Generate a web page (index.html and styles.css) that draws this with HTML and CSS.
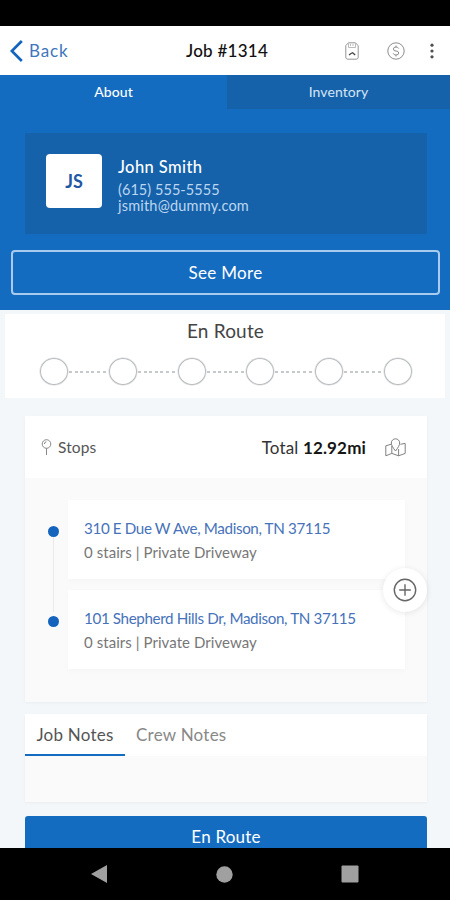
FILE: index.html
```
<!DOCTYPE html>
<html lang="en">
<head>
<meta charset="utf-8">
<title>Job #1314</title>
<link rel="stylesheet" href="styles.css">
</head>
<body>
<div class="phone">
  <div class="status-bar"></div>
  <header class="header">
    <a class="back"><svg width="13" height="24" viewBox="0 0 13 24"><path d="M11.8 2 1.8 12l10 10" fill="none" stroke="#1264bd" stroke-width="2.7"/></svg><span class="back-label">Back</span></a>
    <h1 class="title">Job #1314</h1>
    <div class="actions">
      <svg width="14" height="18" viewBox="0 0 14 18" fill="none" stroke="#959595"><path d="M3.5.8h7l2.7 3v11.4q0 2-2 2H2.8q-2 0-2-2V3.5z"/><path d="M3.5 1v4.5h7V1M5.5 2v2M8 2v2" stroke="#bbb"/><path d="m4 13 2-1.5 1.6-.8 2.6 2.3" stroke="#444" stroke-width="1.3"/></svg>
      <svg width="18" height="18" viewBox="0 0 18 18" fill="none" stroke="#8c8c8c"><circle cx="9" cy="9" r="8.2"/><path d="M11.8 6.6Q11 5 9 5 6.4 5 6.4 7T9 9t2.7 2T9 13q-2.2 0-2.9-1.7M9 3.5V5M9 13v1.5"/></svg>
      <svg class="more" width="4" height="16" viewBox="0 0 4 16" fill="#4d4d4d"><circle cx="2" cy="2.2" r="1.6"/><circle cx="2" cy="8" r="1.6"/><circle cx="2" cy="13.8" r="1.6"/></svg>
    </div>
  </header>
  <section class="hero">
    <nav class="tabs"><a class="tab">About</a><a class="tab tab-dim"><span class="inventory">Inventory</span></a></nav>
    <div class="client">
      <div class="avatar">JS</div>
      <div class="client-info">
        <div class="client-name">John Smith</div>
        <div class="client-phone">(615) 555-5555</div>
        <div class="client-mail">jsmith@dummy.com</div>
      </div>
    </div>
    <button class="see-more"><span>See More</span></button>
  </section>
  <section class="progress">
    <h2 class="progress-title">En Route</h2>
    <div class="steps">
      <i class="step"></i><i class="dash"></i><i class="step"></i><i class="dash"></i><i class="step"></i><i class="dash"></i><i class="step"></i><i class="dash"></i><i class="step"></i><i class="dash"></i><i class="step"></i>
    </div>
  </section>
  <section class="stops">
    <div class="stops-head">
      <svg class="pin" width="11" height="17" viewBox="0 0 11 17" fill="none" stroke="#888"><circle cx="5.5" cy="5" r="4.3"/><path d="M5.5 9.3V16M3.4 5q0-2 2-2.2"/></svg>
      <span class="stops-label">Stops</span>
      <span class="total">Total <b>12.92mi</b></span>
      <svg class="map" width="21" height="19" viewBox="0 0 21 19" fill="none" stroke="#808080"><path d="M6.5 6.2.8 7.8v10l6-2.4 6.8 2.4 6.6-2.4v-10l-4.8.9M6.8 8v7.4M13.6 11v6.8M10.5 13Q6.3 7.8 6.3 5a4.2 4.2 0 0 1 8.4 0q0 2.8-4.2 8z"/></svg>
    </div>
    <div class="stops-body">
      <div class="timeline"><i class="dot"></i><i class="line"></i><i class="dot"></i></div>
      <div class="stop-list">
        <article class="stop"><div class="address">310 E Due W Ave, Madison, TN 37115</div><div class="detail">0 stairs | Private Driveway</div></article>
        <article class="stop"><div class="address">101 Shepherd Hills Dr, Madison, TN 37115</div><div class="detail">0 stairs | Private Driveway</div></article>
      </div>
      <button class="add"><svg width="24" height="24" viewBox="0 0 24 24" fill="none" stroke="#666" stroke-width="1.4"><circle cx="12" cy="12" r="10.7"/><path d="M12 6.2v11.6M6.2 12h11.6"/></svg></button>
    </div>
  </section>
  <section class="notes">
    <nav class="note-tabs"><a class="note-tab active"><span>Job Notes</span></a><a class="note-tab crew"><span>Crew Notes</span></a></nav>
  </section>
  <button class="route-button"><span>En Route</span></button>
  <footer class="nav-bar">
    <svg width="16" height="18" viewBox="0 0 16 18"><path d="M0 9 16 0v18z" fill="#a0a0a0"/></svg>
    <svg width="17" height="17" viewBox="0 0 17 17"><circle cx="8.5" cy="8.5" r="8.2" fill="#a0a0a0"/></svg>
    <svg width="18" height="18" viewBox="0 0 18 18"><rect x=".5" y=".5" width="17" height="17" rx="1" fill="#a0a0a0"/></svg>
  </footer>
</div>
</body>
</html>
```
FILE: styles.css
```
* { box-sizing: border-box; }
body { margin: 0; font-family: Lato, "Liberation Sans", sans-serif; }
h1, h2 { margin: 0; font-weight: 400; }
button { font-family: inherit; padding: 0; border: 0; }
svg { display: block; flex: none; }
.phone { width: 450px; height: 900px; display: flex; flex-direction: column; overflow: hidden; background: #f4f7f9; }
.phone > * { flex: none; }
.status-bar { height: 26px; background: #000; }
.header { height: 49px; background: #fff; display: grid; grid-template-columns: 1fr auto 1fr; align-items: center; padding: 0 16px 0 10px; }
.back { display: flex; align-items: center; gap: 6px; color: #4076bd; font-size: 17px; line-height: 22px; letter-spacing: .9px; }
.title { font-size: 17px; line-height: 22px; font-weight: 500; color: #111; letter-spacing: .25px; margin: 0 -5px 0 5px; }
.actions { display: flex; justify-content: flex-end; align-items: center; }
.actions svg:nth-child(2) { margin: 0 25px 0 28px; }
.hero { height: 235px; background: #146cc0; color: #fff; }
.tabs { display: flex; height: 34px; }
.tab { flex: 1; text-align: center; font-size: 14px; line-height: 33px; font-weight: 500; letter-spacing: .1px; }
.tab-dim { background: #1662aa; color: #d5e5f5; font-weight: 400; flex: 0 0 223px; }
.client { margin: 24px 23px 0 25px; height: 101px; background: #1562aa; display: flex; padding: 21px; gap: 16px; border-radius: 1px; }
.avatar { width: 56px; height: 54px; border-radius: 4px; background: #fff; color: #2257a4; font-size: 18px; font-weight: 700; line-height: 54px; text-align: center; }
.client-info { padding-top: 2px; white-space: nowrap; }
.client-name { font-size: 16.5px; line-height: 22px; font-weight: 500; letter-spacing: .4px; }
.client-phone, .client-mail { font-size: 14.5px; line-height: 17px; color: #bcd6f0; letter-spacing: .2px; }
.client-phone { padding-top: 3px; height: 20px; letter-spacing: .05px; }
.client-mail { line-height: 15px; }
.see-more { display: block; margin: 16px 10px 0 11px; width: 429px; height: 45px; border: 2px solid #a9cbee; border-radius: 4px; background: transparent; color: #fff; font-size: 17px; letter-spacing: .3px; }
.progress { margin: 4px 5px 0; height: 84px; background: #fff; }
.progress-title { text-align: center; font-size: 19px; line-height: 24px; padding: 5px 0 0 1px; height: 44px; color: #444; letter-spacing: .2px; }
.steps { display: flex; align-items: center; padding: 0 33px 0 35px; }
.step { width: 28px; height: 27px; flex: none; border: 1.5px solid #b9bcbf; box-shadow: 0 0 0 .5px #d9dbde; border-radius: 50%; }
.dash { flex: 1; height: 2px; margin: 0 1px; background: repeating-linear-gradient(90deg, #c6c9cb 0 3px, transparent 3px 5.6px); }
.stops { margin: 18px 23px 0 25px; height: 286px; background: #fafafa; box-shadow: 0 1px 3px #0000000b; }
.stops-head { height: 62px; background: #fff; display: flex; align-items: center; padding: 0 21px 0 16px; color: #555; }
.stops-label { font-size: 15.5px; margin-left: 6px; letter-spacing: .1px; }
.total { margin-left: auto; font-size: 17px; color: #333; letter-spacing: .15px; }
.total b { font-weight: 700; color: #161616; }
.map { margin-left: 19px; }
.stops-body { position: relative; padding: 22px 22px 0 22px; display: flex; }
.timeline { width: 12px; height: 101px; margin: 26px 9px 0 0; display: flex; flex-direction: column; align-items: center; }
.dot { width: 11px; height: 11px; border-radius: 50%; background: #1463bd; flex: none; }
.line { width: 1px; flex: 1; margin-bottom: 4px; background: #e9eaeb; }
.stop-list { flex: 1; display: flex; flex-direction: column; gap: 11px; }
.stop { height: 79px; padding: 17px 16px; background: #fff; box-shadow: 0 2px 6px #00000006; white-space: nowrap; }
.address { font-size: 15.2px; line-height: 23px; color: #4672ba; letter-spacing: -.37px; }
.detail { font-size: 15px; line-height: 24px; color: #777; letter-spacing: .06px; }
.add { position: absolute; right: 0; top: 90px; width: 44px; height: 44px; border-radius: 50%; background: #fff; box-shadow: 0 1px 6px #00000018; display: flex; align-items: center; justify-content: center; }
.notes { margin: 12px 23px 0 25px; height: 88px; background: #fafafa; box-shadow: 0 1px 3px #0000000b; }
.note-tabs { display: flex; height: 42px; background: #fff; font-size: 17px; line-height: 41px; letter-spacing: .25px; }
.note-tab { color: #888; }
.active { width: 100px; text-align: center; color: #555; border-bottom: 2px solid #146cc0; }
.crew { margin-left: 11px; }
.route-button { display: block; margin: 14px 23px 0 25px; height: 32px; width: 402px; padding-top: 10px; border-radius: 3px 3px 0 0; background: #146cc0; color: #fff; font-size: 17px; line-height: 22px; letter-spacing: .2px; }
.nav-bar { height: 52px; background: #000; display: flex; justify-content: space-between; align-items: center; padding: 0 91px; }
```
